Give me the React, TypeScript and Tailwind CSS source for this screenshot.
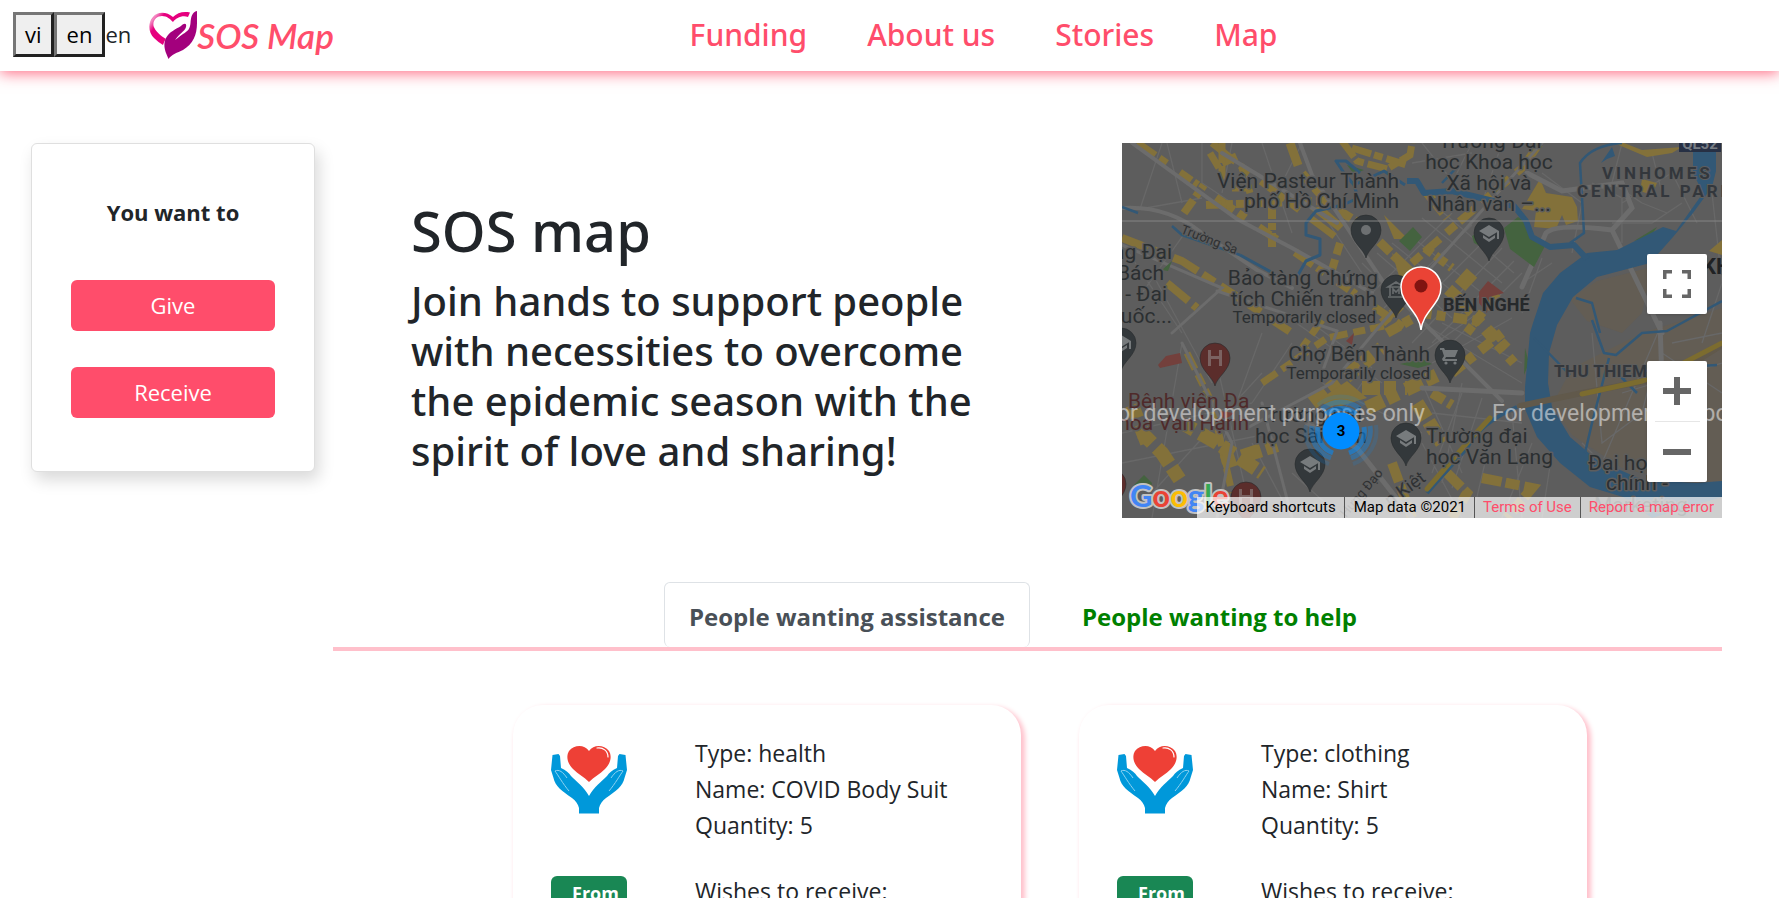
import React from "react";

const HALO = { paintOrder: "stroke" } as const;

function BrandMark() {
  return (
    <svg viewBox="0 0 48 48" className="size-12 shrink-0" aria-hidden="true">
      <defs>
        <linearGradient id="brand-heart" x1="0" y1="0" x2="1" y2="0.6">
          <stop offset="0" stopColor="#e0007f" />
          <stop offset="0.16" stopColor="#f48cc3" />
          <stop offset="0.3" stopColor="#e6007e" />
          <stop offset="1" stopColor="#e6007e" />
        </linearGradient>
      </defs>
      <path
        d="M41 1.5C34 0 28 2 24 6C18 1 9 0 4 6C-2 13 0 22 5 27C8 30 11 32 14 34C15 31 16 29 17 28C12 25 6 20 4.500 15C3.500 9 8 5 13 5C18 5 21 8 24 11C27 7 33 4 39 6Z"
        fill="url(#brand-heart)"
      />
      <path
        d="M48 0C43 1 42 6 41.500 12C41 18 39 20 34 23C31 25 29 27 26 29C30 23 36 20 37 16C38 12 35 12 32 15C27 18 20 21 17 27C14 33 16 39 17 42L19.500 48C23 43 28 42 34 39C44 33 48 24 48 12Z"
        fill="#a3007d"
      />
    </svg>
  );
}

function GivingHands() {
  return (
    <svg viewBox="0 0 76 68" className="w-19" aria-hidden="true">
      <path
        d="M38 5C33-2 23-1 18 5C15 10 16 17 22 23C27 28 33 31 38 36C43 31 49 28 54 23C60 17 61 10 58 5C53-1 43-2 38 5Z"
        fill="#ee4036"
      />
      <path d="M46 2C52 1 57 5 57 11" fill="none" stroke="#fff" strokeWidth="1.2" strokeLinecap="round" />
      <g fill="#0098da">
        <path d="M1.500 9L7.500 8L9 10L10 22C15 24 18 27 20 30C25 35 33 41 38 50L38 67.500H28V62C27 58 25 55 21 52C11 45 4 40 2.500 32L0 24Z" />
        <path d="M74.500 9L68.500 8L67 10L66 22C61 24 58 27 56 30C51 35 43 41 38 50L38 67.500H48V62C49 58 51 55 55 52C65 45 72 40 73.500 32L76 24Z" />
      </g>
      <path
        d="M18 45C12 38 7 29 4 25C8 23 12 26 16 32M58 45C64 38 69 29 72 25C68 23 64 26 60 32"
        fill="none"
        stroke="#8fd3f2"
        strokeWidth="1"
      />
    </svg>
  );
}

type PinKind = "dot" | "school" | "museum" | "hospital" | "cart";

function Pin({ x, y, kind }: { x: number; y: number; kind: PinKind }) {
  const hospital = kind === "hospital";
  return (
    <g transform={`translate(${x} ${y})`}>
      <path
        d="M0 28C-2 19-15 12-15 0A15 15 0 0 1 15 0C15 12 2 19 0 28Z"
        fill={hospital ? "#5b2d2b" : "#33383b"}
        stroke="#292c2e"
        strokeWidth="0.6"
      />
      {kind === "dot" && <circle r="5" fill="#6d7072" />}
      {kind === "school" && (
        <g fill="#777b7d">
          <path d="M0-8L10-2L0 4L-10-2ZM-6 2L0 6L6 2V5L0 9L-6 5Z" />
          <path d="M8-2H10V6H8Z" />
        </g>
      )}
      {kind === "museum" && (
        <g fill="none" stroke="#686c6e" strokeWidth="1.6">
          <path d="M-8-3L0-8L8-3ZM-8 7H8M-6-3V6M6-3V6M-3 4V-1L0 2L3-1V4" />
        </g>
      )}
      {hospital && <path d="M-7-8H-4V-2H4V-8H7V8H4V1H-4V8H-7Z" fill="#7b6261" />}
      {kind === "cart" && (
        <g fill="#74787a">
          <path d="M-10-7H-6L-5-5H8L5 2H-4L-5 4H7V6H-7L-8 4L-6 1L-8-5H-10Z" />
          <circle cx="-4" cy="8" r="1.600" />
          <circle cx="5" cy="8" r="1.600" />
        </g>
      )}
    </g>
  );
}

type Label = { x: number; y: number; s: string; a?: "start" | "middle" | "end"; size?: number };

const places: Label[] = [
  { x: 277, y: 45, s: "Viện Pasteur Thành", a: "end" },
  { x: 277, y: 65, s: "phố Hồ Chí Minh", a: "end" },
  { x: 368, y: 5, s: "Trường Đại", a: "middle" },
  { x: 367, y: 26, s: "học Khoa học", a: "middle" },
  { x: 367, y: 47, s: "Xã hội và", a: "middle" },
  { x: 367, y: 68, s: "Nhân văn –...", a: "middle" },
  { x: 50, y: 116, s: "ng Đại", a: "end" },
  { x: 42, y: 137, s: "Bách", a: "end" },
  { x: 45, y: 158, s: "- Đại", a: "end" },
  { x: 50, y: 180, s: "quốc...", a: "end" },
  { x: 256, y: 142, s: "Bảo tàng Chứng", a: "end" },
  { x: 255, y: 163, s: "tích Chiến tranh", a: "end" },
  { x: 254, y: 180, s: "Temporarily closed", a: "end", size: 17 },
  { x: 308, y: 218, s: "Chợ Bến Thành", a: "end" },
  { x: 308, y: 236, s: "Temporarily closed", a: "end", size: 17 },
  { x: 137, y: 279, s: "Trường Đại" },
  { x: 133, y: 300, s: "học Sài Gòn" },
  { x: 304, y: 300, s: "Trường đại" },
  { x: 304, y: 321, s: "học Văn Lang" },
  { x: 466, y: 327, s: "Đại học" },
  { x: 484, y: 347, s: "chính -" },
  { x: 472, y: 369, s: "Marketing" },
];

function CityMap() {
  return (
    <svg
      viewBox="0 0 600 375"
      preserveAspectRatio="xMidYMid slice"
      className="block h-full w-full font-['Roboto',sans-serif]"
      role="img"
      aria-label="Map of Ho Chi Minh City"
    >
      <rect width="600" height="375" fill="#5d5d5d" />
      <path d="M448 156L475 138L530 124L520 170L500 190L465 178ZM430 262L450 225L520 190L600 165V338L560 340L500 325L450 292Z" fill="#635d54" />

      <g stroke="#686868" strokeWidth="1.3" fill="none">
        <path d="M40 0L18 66M18 66L80 55M45 0L60 60M80 0V40L110 60M110 0L100 50M0 100L60 190M70 80L20 150M30 130L90 240M180 0L150 60M140 0L170 90M200 70L240 130M60 200L30 375M90 200L130 375M140 190L100 300M0 290L130 260M0 320L150 290M30 350L140 230M160 170L260 240M170 200L130 260M190 180L250 225M200 240L300 290M240 240L200 300M300 240L340 330M340 240L320 340M310 270L400 280" />
        <path d="M240 120L310 190M255 110L330 175M270 100L345 160M285 90L360 150M300 75L380 140M310 60L392 130M250 150L330 70M262 165L350 82M280 180L370 90M290 200L380 105M310 200L392 118M330 200L400 130M350 0L320 60M300 0L340 50M290 20L350 10M380 0L360 60M420 30L460 60L450 110M470 40L500 55L500 100M500 60L550 30L575 80M520 60L545 70M430 120L400 140M420 115L400 170M490 80L530 80L560 60M500 0L490 40L520 60M530 10L540 50" />
        <path d="M300 180L400 240M320 180L400 220M310 220L390 175M300 210L370 160M340 250L310 330M360 255L330 345M300 300L340 375M370 290L350 375M390 270L400 375M410 300L380 375M430 310L420 375M470 190L480 300L520 270L530 230M460 300L480 320L540 180M550 200L600 190M540 210L600 250M590 50L600 140L580 200M500 250L600 220M170 330L220 375M130 300L170 375" />
      </g>

      <g stroke="#83713a" fill="none">
        <path d="M15 0L290 190" strokeWidth="8" strokeDasharray="22 5 9 16 14 3 5 22" />
        <path d="M90 0L125 28L215 95" strokeWidth="7" strokeDasharray="30 6 12 14" />
        <path d="M84 62L200 58M100 20L118 12M62 70L82 42M150 60L150 104" strokeWidth="8" strokeDasharray="16 4 7 3" />
        <path d="M168 0L178 28L208 62L240 82L290 130" strokeWidth="9" strokeDasharray="24 9 15 4" />
        <path d="M218 100L209 130M290 120L330 85L400 25L418 0" strokeWidth="8" strokeDasharray="12 5 20 9" />
        <path d="M0 95L60 118L125 160L170 190M45 140L75 165" strokeWidth="8" strokeDasharray="28 6 14 7" />
        <path d="M65 210L90 260L110 350M140 240L205 195L262 183M200 177L180 205" strokeWidth="7" strokeDasharray="18 6 12 5" />
        <path d="M20 290L40 310L60 340M60 280L95 300L140 330M100 320L155 302M10 262L25 300" strokeWidth="14" strokeDasharray="14 7 20 5" />
        <path d="M190 260L235 225L260 205M240 245L285 245M245 265L330 225M295 260L320 300M350 130L325 158" strokeWidth="14" strokeDasharray="18 4 12 9" />
        <path d="M265 190L300 170L355 178L392 220M340 160L385 205M330 230L380 190M310 250L330 262" strokeWidth="10" strokeDasharray="14 5 9 8" />
        <path d="M303 105L330 125M260 180L290 152M345 190L375 150M305 50L325 75" strokeWidth="9" strokeDasharray="9 4 13 5" />
        <path d="M325 330L345 350L330 375M360 335L410 345L385 375M270 320L290 375" strokeWidth="10" strokeDasharray="20 4 14 5" />
        <path d="M220 -2L235 18L265 26L288 12L290 0M230 5L285 22M100 0V30L88 10M120 25L128 50M110 45H130" strokeWidth="7" strokeDasharray="20 3 9 4" />
      </g>
      <g fill="#83713a">
        <path d="M188 66L200 63L222 82L216 88ZM400 66L418 36L424 50L450 54L455 64L456 78L444 82L440 72L434 86L412 84L414 68ZM587 108L600 97V112ZM262 72L286 96L272 96ZM270 110L292 132L278 136ZM520 36L535 40L530 52L518 48ZM195 258L225 238L245 255L212 265Z" />
        <path d="M502 0L520 7L560 4L550 10L525 14L492 0Z" />
      </g>

      <g stroke="#6c6c6c" fill="none" strokeLinecap="round">
        <path d="M10 0L115 76L170 105L250 150M0 65Q45 62 80 90L135 127L170 145M178 0L190 32L262 140L380 258M100 10L215 80" strokeWidth="4" />
        <path d="M400 144L424 90Q434 80 490 87L540 190M490 87L510 65L500 40L440 48L405 30M538 180L540 240M300 245L400 250M185 280L235 305L290 375" strokeWidth="5" />
        <path d="M0 102L100 145L50 190M95 148L215 188L200 230M60 200L110 300L95 375M140 260L170 375M125 285L210 240L260 180L340 90L420 0" strokeWidth="3" />
      </g>

      <g fill="#44633f">
        <path d="M277 98L291 84L300 94L288 108ZM382 85L396 74L407 82L410 95L423 103L412 124L388 106ZM225 22L242 27L232 31ZM40 127L50 118L46 128ZM512 98L535 84L528 94ZM278 221L300 216L310 221L296 225Z" />
        <path d="M350 93L360 88L364 106L352 100ZM403 205L407 220L402 232ZM12 342L22 332L30 340L28 348Z" />
      </g>
      <path d="M36 222L44 213L58 210L60 220L38 225ZM357 149L366 138L382 150L367 154L365 170L357 160ZM224 198L232 190L230 202ZM98 268L112 270L102 278Z" fill="#73403c" />

      <path
        d="M571 0H594V28L590 44L571 70L551 94L528 120L475 134L451 154L435 182L427 210L426 240L430 264L448 294L475 317L521 337L575 340L600 338V354L530 375L501 354L468 344L438 320L415 294L403 266V244L408 190L411 180L421 150L438 130L465 110L495 107L541 84L554 88L581 50L571 30Z"
        fill="#325876"
      />
      <g stroke="#325876" fill="none" strokeWidth="4" strokeLinejoin="round">
        <path d="M285 38H295L302 50L330 48L392 63L404 78L410 94L428 104L452 102L465 116" strokeWidth="6" />
        <path d="M283 42L262 28L232 42L236 55L221 62M232 42L222 30L214 18L224 18L238 30M221 62L194 68L184 80V92L198 96V112L184 118L176 132L160 135L140 124L118 112" strokeWidth="3" />
        <path d="M0 64L16 70M50 83L60 92L118 112M336 23L320 40M448 100L462 90L458 20Q470 2 500 0M454 155L470 160L478 190M470 177L482 210L494 212L520 190L545 188L600 158M487 215L470 280L463 310M412 195L448 232M515 250L500 235L530 226L595 222" strokeWidth="2.500" />
        <path d="M395 264Q358 280 345 305L305 350" strokeWidth="4" />
      </g>
      <path d="M479 20L490 4L493 13L485 16Z" fill="#325876" />
      <g fill="none" strokeLinecap="round">
        <path d="M398 263L460 250L550 233L600 202" stroke="#61594b" strokeWidth="6" />
        <path d="M460 251L520 238L552 225L600 200" stroke="#7c6c2f" strokeWidth="5" />
        <path d="M305 346L345 300L368 275" stroke="#7c6c2f" strokeWidth="5" />
      </g>

      <path d="M557 0H599V9H557Z" fill="#273044" />
      <text x="578" y="6" textAnchor="middle" fontSize="15" fontWeight="700" fill="#777d84">QL52</text>

      <g fill="#2b2f31" stroke="#5d5d5d" strokeWidth="3" strokeLinejoin="round">
        {places.map((p) => (
          <text key={`${p.x}-${p.y}`} x={p.x} y={p.y} textAnchor={p.a ?? "start"} fontSize={p.size ?? 21} style={HALO}>
            {p.s}
          </text>
        ))}
      </g>
      <g fontSize="21" fill="#4f2a2a" stroke="#5d5d5d" strokeWidth="3" strokeLinejoin="round">
        <text x="6" y="265" style={HALO}>Bệnh viện Đa</text>
        <text x="127" y="287" textAnchor="end" style={HALO}>hoa Vạn Hạnh</text>
      </g>
      <g fontSize="13" fill="#2f3133" stroke="#5d5d5d" strokeWidth="2">
        <text transform="translate(58 90) rotate(21)" style={HALO}>Trường Sa</text>
        <text transform="translate(224 375) rotate(-50)" style={HALO}>Hưng Đạo</text>
        <text transform="translate(268 364) rotate(-36)" fontSize="18" style={HALO}>n Kiệt</text>
      </g>
      <g fill="#33373c" fontWeight="700" stroke="#5d5d5d" strokeWidth="2">
        <text x="480" y="36" fontSize="17" className="tracking-[3px]" style={HALO}>VINHOMES</text>
        <text x="455" y="54" fontSize="17" className="tracking-[3px]" style={HALO}>CENTRAL PARK</text>
        <text x="321" y="168" fontSize="18" fill="#26292b" style={HALO}>BẾN NGHÉ</text>
        <text x="432" y="234" fontSize="17" className="tracking-wide" style={HALO}>THU THIEM</text>
        <text x="580" y="131" fontSize="22" fill="#202224" style={HALO}>KHU</text>
      </g>

      <Pin x={244} y={87} kind="dot" />
      <Pin x={367} y={90} kind="school" />
      <Pin x={274} y={147} kind="museum" />
      <Pin x={93} y={215} kind="hospital" />
      <Pin x={328} y={212} kind="cart" />
      <Pin x={284} y={295} kind="school" />
      <Pin x={188} y={321} kind="school" />
      <Pin x={-1} y={200} kind="school" />
      <Pin x={124} y={354} kind="hospital" />
      <Pin x={-11} y={341} kind="hospital" />

      <path d="M0 78H600" stroke="#858585" strokeWidth="1" />

      <g fontSize="23" fill="#fff" opacity="0.5">
        <text x="303" y="278" textAnchor="end">For development purposes only</text>
        <text x="370" y="278">For development purposes only</text>
      </g>

      <g transform="translate(219 288)" fill="none" stroke="#008cff">
        <g strokeWidth="5" opacity="0.55">
          <path d="M-15-17A23 23 0 0 1 15-17M23-4A23 23 0 0 1 8 22M-23-4A23 23 0 0 0-8 22" />
        </g>
        <g strokeWidth="5" opacity="0.35">
          <path d="M-19-22A29 29 0 0 1 19-22M29-5A29 29 0 0 1 10 27M-29-5A29 29 0 0 0-10 27" />
        </g>
        <g strokeWidth="4" opacity="0.15">
          <path d="M-23-26A35 35 0 0 1 23-26M35-6A35 35 0 0 1 12 33M-35-6A35 35 0 0 0-12 33" />
        </g>
        <circle r="18.500" fill="#008cff" stroke="none" />
        <text y="5" textAnchor="middle" fontSize="15" fontWeight="700" fill="#000" stroke="none">3</text>
      </g>

      <path
        d="M299 187C297 168 279 161 279 144A20 20 0 0 1 319 144C319 161 301 168 299 187Z"
        fill="#ea4335"
        stroke="#fff"
        strokeWidth="1.500"
      />
      <circle cx="299" cy="143" r="6.500" fill="#811411" />

      <text
        x="8"
        y="364"
        fontSize="31"
        fontWeight="700"
        stroke="#c2c2c2"
        strokeWidth="4"
        strokeLinejoin="round"
        className="font-['Lato',sans-serif]"
        style={HALO}
      >
        <tspan fill="#4285f4">G</tspan>
        <tspan fill="#ea4335">o</tspan>
        <tspan fill="#fbbc04">o</tspan>
        <tspan fill="#4285f4">g</tspan>
        <tspan fill="#34a853">l</tspan>
        <tspan fill="#ea4335">e</tspan>
      </text>
    </svg>
  );
}

function MapPanel() {
  return (
    <section className="relative h-[375px] w-[600px] max-w-full shrink-0 overflow-hidden" aria-label="Map">
      <CityMap />
      <button
        type="button"
        aria-label="Toggle fullscreen view"
        className="absolute top-[111px] right-[15px] flex size-15 items-center justify-center rounded-xs bg-white shadow"
      >
        <svg viewBox="0 0 28 28" className="size-7" fill="none" stroke="#666" strokeWidth="3.500">
          <path d="M1.750 9V1.750H9M19 1.750H26.250V9M26.250 19V26.250H19M9 26.250H1.750V19" />
        </svg>
      </button>
      <div className="absolute right-[15px] bottom-9 flex w-15 flex-col items-center rounded-xs bg-white shadow">
        <button type="button" aria-label="Zoom in" className="flex size-15 items-center justify-center">
          <svg viewBox="0 0 28 28" className="size-7" fill="#666">
            <path d="M11 0H17V11H28V17H17V28H11V17H0V11H11Z" />
          </svg>
        </button>
        <div className="h-px w-[45px] bg-[#e6e6e6]" />
        <button type="button" aria-label="Zoom out" className="flex size-15 items-center justify-center">
          <svg viewBox="0 0 28 28" className="size-7" fill="#666">
            <path d="M0 11H28V17H0Z" />
          </svg>
        </button>
      </div>
      <div className="absolute right-0 bottom-0 flex h-[21px] divide-x divide-[#555] bg-white/70 font-['Roboto',sans-serif] text-[15px] leading-[21px] whitespace-nowrap text-black">
        <button type="button" className="pr-2 pl-[9px]">Keyboard shortcuts</button>
        <span className="pr-2 pl-[9px]">Map data ©2021</span>
        <a href="#terms" className="px-2 text-[#ff4d6b]">Terms of Use</a>
        <a href="#report" className="px-2 text-[#ff4d6b]">Report a map error</a>
      </div>
    </section>
  );
}

function RequestCard({ type, name, quantity }: { type: string; name: string; quantity: number }) {
  return (
    <article className="flex w-[508px] gap-17 rounded-[30px] bg-white px-[38px] pt-[30px] pb-10 shadow-[3px_3px_5px_1px_#ffc0cb]">
      <div className="flex w-19 shrink-0 flex-col pt-[11px]">
        <GivingHands />
        <div className="mt-[62px] rounded-md bg-[#198754] py-2 pr-3 pl-[21px] text-[18px] leading-4.5 font-bold text-white">
          From District 1
        </div>
      </div>
      <div className="text-[23px] leading-9">
        <p>Type: {type}</p>
        <p>Name: {name}</p>
        <p>Quantity: {quantity}</p>
        <p className="mt-[30px]">Wishes to receive:</p>
      </div>
    </article>
  );
}

export default function App() {
  return (
    <div className="h-screen overflow-hidden bg-white font-['Open_Sans','Noto_Sans',sans-serif] text-[22px] text-[#212529]">
      <header className="relative grid h-[71px] grid-cols-[1fr_auto_1fr] items-center bg-white px-[13px] pb-0.5 shadow-[0_2px_14px_rgba(255,77,107,0.85)]">
        <div className="flex items-center">
          <button type="button" className="h-[45px] border-3 border-[#767676] border-r-[#212121] border-b-[#212121] bg-[#efefef] px-[9px] text-black">
            vi
          </button>
          <button type="button" className="h-[45px] border-3 border-[#767676] border-r-[#212121] border-b-[#212121] bg-[#efefef] px-[10px] text-black">
            en
          </button>
          <span>en</span>
          <a href="#home" className="ml-[18px] flex items-center text-[#ff4d6b]">
            <BrandMark />
            <span className="font-['Lato',sans-serif] text-[35px] leading-10 font-semibold italic">SOS Map</span>
          </a>
        </div>
        <nav className="flex gap-15 pl-[188px] font-['Noto_Sans',sans-serif] text-[30px] leading-10 font-medium text-[#ff4d6b]">
          <a href="#funding">Funding</a>
          <a href="#about">About us</a>
          <a href="#stories">Stories</a>
          <a href="#map">Map</a>
        </nav>
      </header>

      <div className="flex items-start gap-[18px] pt-18 pr-[57px] pl-[31px]">
        <aside className="w-[284px] shrink-0 rounded-md border border-[#dfdfdf] bg-white px-[39px] pt-[50px] pb-[53px] text-center shadow-[4px_8px_16px_rgba(0,0,0,0.15)]">
          <h2 className="text-[22px] leading-9 font-bold">You want to</h2>
          <div className="mt-[50px] flex flex-col gap-9">
            <button type="button" className="h-[51px] rounded-md bg-[#ff4d6b] text-white">Give</button>
            <button type="button" className="h-[51px] rounded-md bg-[#ff4d6b] text-white">Receive</button>
          </div>
        </aside>

        <main className="min-w-0 flex-1">
          <div className="flex justify-between gap-8 pl-[78px]">
            <div className="w-[600px] pt-[51px] font-['Noto_Sans',sans-serif] font-medium">
              <h1 className="text-[56px] leading-18">SOS map</h1>
              <p className="mt-[10px] text-[40px] leading-[50px]">
                Join hands to support people with necessities to overcome the epidemic season with the spirit of love
                and sharing!
              </p>
            </div>
            <MapPanel />
          </div>

          <div role="tablist" className="mt-16 flex justify-center gap-7 border-b-4 border-[#ffc0cb] pr-[10px] text-[24px] font-bold">
            <button
              type="button"
              role="tab"
              aria-selected="true"
              className="-mb-px h-[65px] rounded-md border border-b-0 border-[#dee2e6] bg-white px-6 pt-1 text-[#495057]"
            >
              People wanting assistance
            </button>
            <button type="button" role="tab" aria-selected="false" className="h-[65px] px-6 pt-1 text-[#008000]">
              People wanting to help
            </button>
          </div>

          <div className="mt-[54px] flex justify-center gap-[58px] pl-[45px]">
            <RequestCard type="health" name="COVID Body Suit" quantity={5} />
            <RequestCard type="clothing" name="Shirt" quantity={5} />
          </div>
        </main>
      </div>
    </div>
  );
}
